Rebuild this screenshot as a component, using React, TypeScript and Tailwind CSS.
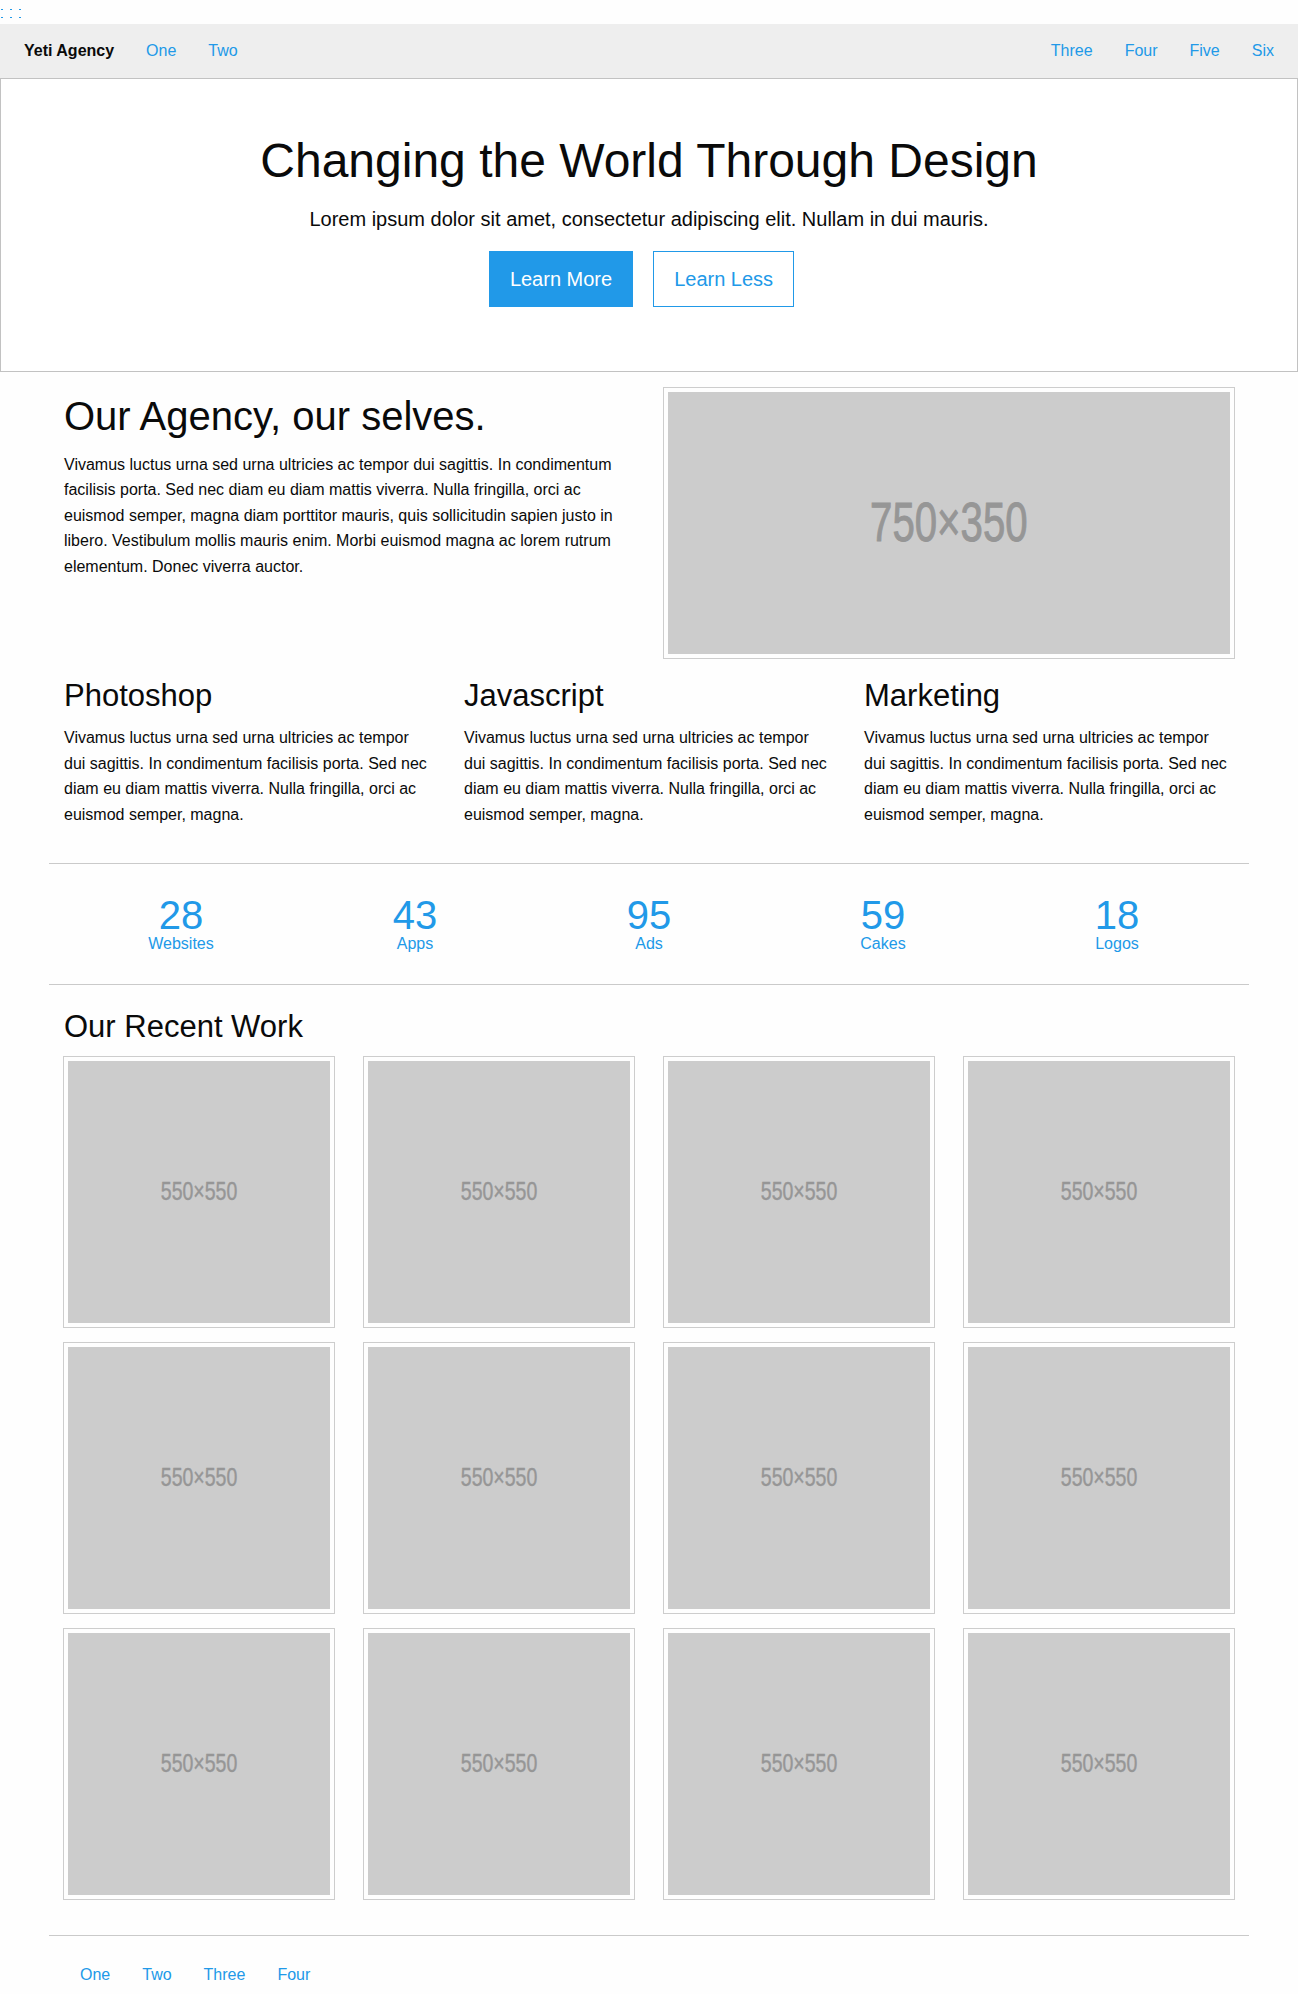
const blue = "text-[#2199e8]";

const services = [
  { title: "Photoshop" },
  { title: "Javascript" },
  { title: "Marketing" },
];

const stats = [
  { n: "28", label: "Websites" },
  { n: "43", label: "Apps" },
  { n: "95", label: "Ads" },
  { n: "59", label: "Cakes" },
  { n: "18", label: "Logos" },
];

const shortText =
  "Vivamus luctus urna sed urna ultricies ac tempor dui sagittis. In condimentum facilisis porta. Sed nec diam eu diam mattis viverra. Nulla fringilla, orci ac euismod semper, magna.";

function Placeholder({ label, w, h, text }: { label: string; w: string; h: string; text: string }) {
  return (
    <div className="inline-block border-4 border-[#fefefe] shadow-[0_0_0_1px_rgba(10,10,10,0.2)] leading-none mb-4">
      <div className={`${w} ${h} bg-[#cccccc] flex items-center justify-center overflow-hidden`}>
        <span className={`${text} inline-block text-[#969696] leading-none`}>{label}</span>
      </div>
    </div>
  );
}

function Rule() {
  return <div className="max-w-[1200px] mx-auto my-5 h-px bg-[#cacaca]" />;
}

export default function App() {
  return (
    <div className="bg-[#fefefe] text-[#0a0a0a] font-['Liberation_Sans',Arial,sans-serif] min-h-screen">
      {/* odd little dots at the very top */}
      <div className="h-6">
        <svg width="24" height="24" viewBox="0 0 24 24" className="block">
          <rect x="1" y="9" width="2" height="1" fill="#2199e8" />
          <rect x="10" y="9" width="2" height="1" fill="#2199e8" />
          <rect x="19" y="9" width="2" height="1" fill="#2199e8" />
          <rect x="1" y="17" width="2" height="1" fill="#2199e8" />
          <rect x="10" y="17" width="2" height="1" fill="#2199e8" />
          <rect x="19" y="17" width="2" height="1" fill="#2199e8" />
        </svg>
      </div>

      {/* top bar */}
      <nav className="h-[54.4px] bg-[#eeeeee] flex items-center justify-between px-2 text-base leading-none">
        <ul className="flex items-center">
          <li className="px-4 font-bold">Yeti Agency</li>
          <li><a className={`px-4 ${blue}`}>One</a></li>
          <li><a className={`px-4 ${blue}`}>Two</a></li>
        </ul>
        <ul className="flex items-center">
          <li><a className={`px-4 ${blue}`}>Three</a></li>
          <li><a className={`px-4 ${blue}`}>Four</a></li>
          <li><a className={`px-4 ${blue}`}>Five</a></li>
          <li><a className={`px-4 ${blue}`}>Six</a></li>
        </ul>
      </nav>

      {/* hero */}
      <section className="bg-white border border-[#c2c2c2] py-12 text-center mb-4">
        <h1 className="text-[48px] leading-[1.4] mb-2">Changing the World Through Design</h1>
        <p className="text-[20px] leading-[1.6] mb-4">
          Lorem ipsum dolor sit amet, consectetur adipiscing elit. Nullam in dui mauris.
        </p>
        <div className="flex justify-center gap-[5px] mb-4">
          <a className="mr-[15px] bg-[#2199e8] border border-[#2199e8] text-white text-[20px] leading-none px-5 py-[17px]">
            Learn More
          </a>
          <a className="mr-[15px] bg-white border border-[#2199e8] text-[#2199e8] text-[20px] leading-none px-5 py-[17px]">
            Learn Less
          </a>
        </div>
      </section>

      {/* agency */}
      <div className="max-w-[1200px] mx-auto grid grid-cols-2">
        <div className="px-[15px]">
          <h2 className="text-[40px] leading-[1.4] mb-2">Our Agency, our selves.</h2>
          <p className="text-base leading-[1.6] mb-4">
            Vivamus luctus urna sed urna ultricies ac tempor dui sagittis. In condimentum facilisis porta. Sed nec diam
            eu diam mattis viverra. Nulla fringilla, orci ac euismod semper, magna diam porttitor mauris, quis
            sollicitudin sapien justo in libero. Vestibulum mollis mauris enim. Morbi euismod magna ac lorem rutrum
            elementum. Donec viverra auctor.
          </p>
        </div>
        <div className="px-[15px]">
          <Placeholder
            label="750×350"
            w="w-[562px]"
            h="h-[262px]"
            text="text-[55px] scale-x-[0.73] [-webkit-text-stroke:1px_#969696]"
          />
        </div>
      </div>

      {/* services */}
      <div className="max-w-[1200px] mx-auto grid grid-cols-3">
        {services.map((s) => (
          <div key={s.title} className="px-[15px]">
            <h3 className="text-[31px] leading-[1.4] mb-2">{s.title}</h3>
            <p className="text-base leading-[1.6] mb-4">{shortText}</p>
          </div>
        ))}
      </div>

      <Rule />

      {/* stats */}
      <div className="max-w-[1200px] mx-auto px-[15px] grid grid-cols-5 pt-[11px] pb-[12px] text-center">
        {stats.map((s) => (
          <div key={s.label} className={blue}>
            <div className="text-[40px] leading-none">{s.n}</div>
            <div className="text-base leading-none mt-px">{s.label}</div>
          </div>
        ))}
      </div>

      <Rule />

      {/* recent work */}
      <div className="max-w-[1200px] mx-auto">
        <h3 className="px-[15px] text-[31px] leading-[1.4] mb-2">Our Recent Work</h3>
        <div className="grid grid-cols-4">
          {Array.from({ length: 12 }).map((_, i) => (
            <div key={i} className="px-[15px] h-[286px]">
              <Placeholder
                label="550×550"
                w="w-[262px]"
                h="h-[262px]"
                text="text-[25px] scale-x-[0.78] [-webkit-text-stroke:0.4px_#969696]"
              />
            </div>
          ))}
        </div>
      </div>

      <Rule />

      {/* footer menu */}
      <div className="max-w-[1200px] mx-auto px-[15px]">
        <ul className="flex text-base leading-none">
          {["One", "Two", "Three", "Four"].map((l) => (
            <li key={l}>
              <a className={`block px-4 py-[11.2px] ${blue}`}>{l}</a>
            </li>
          ))}
        </ul>
      </div>
    </div>
  );
}
